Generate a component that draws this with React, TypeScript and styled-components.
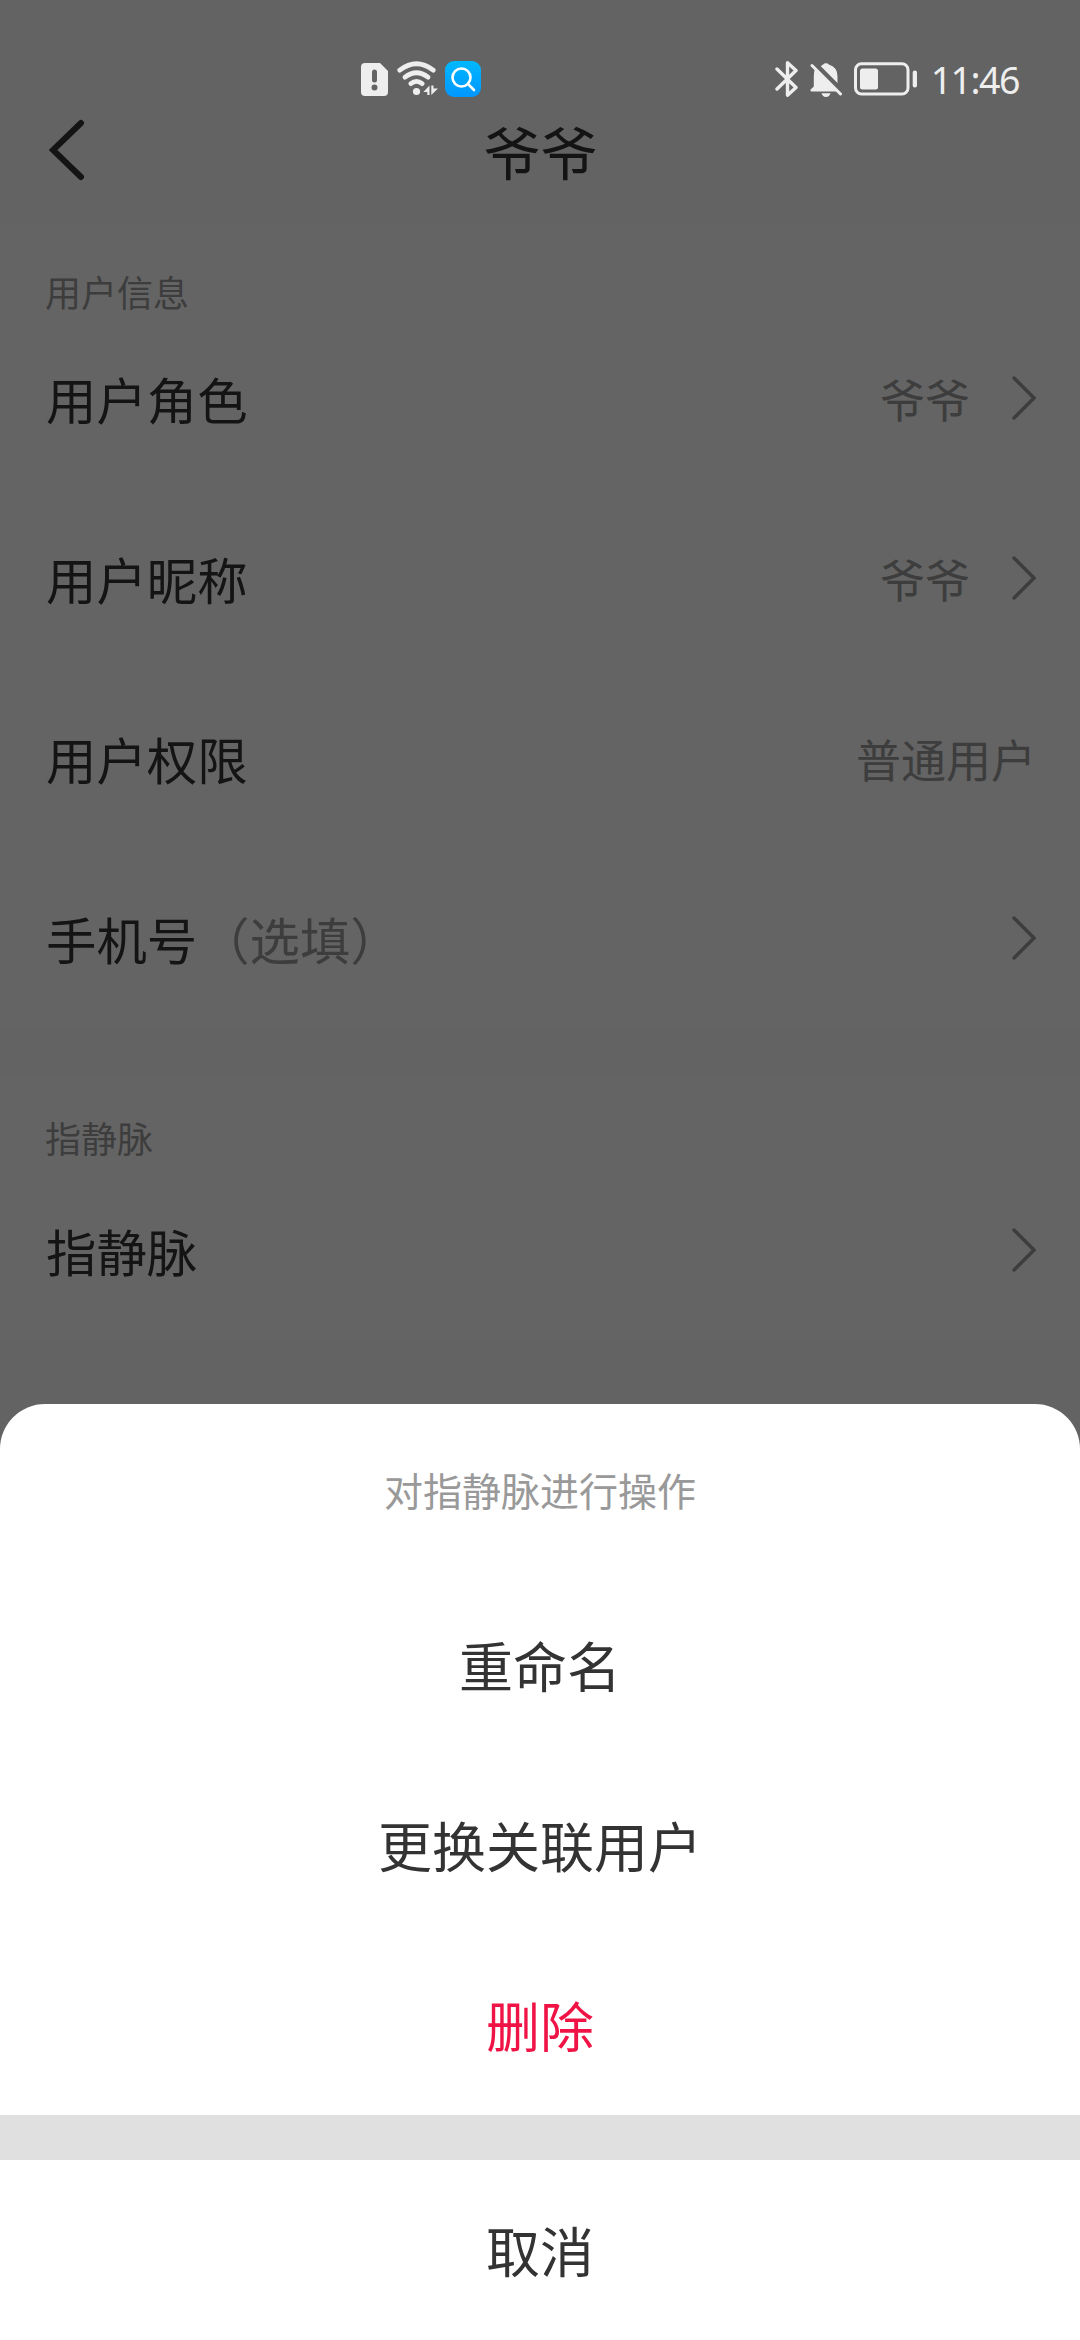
import React from "react";
import styled, { createGlobalStyle } from "styled-components";

const GlobalStyle = createGlobalStyle`
  * { box-sizing: border-box; }
  body {
    margin: 0;
    font-family: "Noto Sans CJK SC", "Noto Sans", sans-serif;
  }
`;

const Screen = styled.div`
  position: relative;
  width: 1080px;
  height: 2340px;
  overflow: hidden;
  background: #f7f7f7;
`;

const Header = styled.header`
  display: grid;
  grid-template-columns: 1fr auto 1fr;
  align-items: center;
  height: 225px;
  padding: 75px 48px 0 49px;
`;

const BackIcon = styled.svg`
  width: 36px;
  height: 62px;
`;

const Title = styled.h1`
  margin: 0;
  font-size: 57px;
  font-weight: 400;
  line-height: 80px;
  color: #333;
`;

const Section = styled.section`
  margin-bottom: 48px;
  background: #fafafa;
`;

const SectionTitle = styled.h2<{ $offset: number }>`
  height: 84px;
  margin: 0;
  padding: ${(p) => p.$offset}px 45px 0;
  font-size: 36px;
  font-weight: 400;
  line-height: 40px;
  color: #999;
`;

const Row = styled.div`
  display: flex;
  align-items: center;
  height: 180px;
  padding: 0 44px 0 46px;
`;

const Label = styled.span`
  flex: 1;
  font-size: 50.4px;
  line-height: 60px;
  color: #333;
`;

const Hint = styled.span`
  margin-left: 2px;
  color: #999;
`;

const Value = styled.span`
  font-size: 45px;
  line-height: 60px;
  color: #999;
`;

const RowArrow = styled.svg`
  width: 24px;
  height: 44px;
  margin: 0 0 2px 42px;
`;

const Scrim = styled.div`
  position: absolute;
  inset: 0;
  display: flex;
  flex-direction: column;
  justify-content: space-between;
  background: rgba(0, 0, 0, 0.6);
`;

const StatusBar = styled.div`
  display: flex;
  align-items: center;
  justify-content: space-between;
  height: 36px;
  margin-top: 61px;
  padding: 0 61px 0 361px;
  color: #eee;
`;

const StatusGroup = styled.div<{ $gap: number }>`
  display: flex;
  align-items: center;
  gap: ${(p) => p.$gap}px;
`;

const Glyph = styled.svg`
  display: block;
  flex: none;
`;

const Clock = styled.span`
  margin-left: 2px;
  padding-top: 2px;
  font-family: "Noto Sans", sans-serif;
  font-size: 37.5px;
  letter-spacing: -1.5px;
  line-height: 36px;
`;

const Sheet = styled.div`
  border-radius: 45px 45px 0 0;
  background: #fff;
`;

const SheetTitle = styled.div`
  height: 171px;
  font-size: 39px;
  line-height: 171px;
  text-align: center;
  color: #999;
`;

const Action = styled.button<{ $danger?: boolean }>`
  display: block;
  width: 100%;
  height: 180px;
  padding: 0;
  border: 0;
  background: none;
  font-family: inherit;
  font-size: 54px;
  line-height: 180px;
  color: ${(p) => (p.$danger ? "#f01446" : "#333")};
`;

const Divider = styled.div`
  height: 45px;
  background: #e0e0e0;
`;

const Arrow = () => (
  <RowArrow viewBox="0 0 24 44" fill="none" stroke="#999" strokeWidth="3.4" strokeLinecap="round">
    <path d="M2 2L22 22L2 42" />
  </RowArrow>
);

interface ItemProps {
  label: string;
  hint?: string;
  value?: string;
  arrow?: boolean;
}

const Item = ({ label, hint, value, arrow }: ItemProps) => (
  <Row>
    <Label>
      {label}
      {hint && <Hint>{hint}</Hint>}
    </Label>
    {value && <Value>{value}</Value>}
    {arrow && <Arrow />}
  </Row>
);

const SimAlertIcon = () => (
  <Glyph width="27" height="33" viewBox="0 0 27 33">
    <path
      fill="currentColor"
      fillRule="evenodd"
      d="M4 0H19L27 8V29Q27 33 23 33H4Q0 33 0 29V4Q0 0 4 0ZM13.5 6.5Q11 6.5 11 9V17Q11 19.5 13.5 19.5Q16 19.5 16 17V9Q16 6.5 13.5 6.5ZM13.5 21.5A3 3 0 1 0 13.5 27.5A3 3 0 1 0 13.5 21.5Z"
    />
  </Glyph>
);

const WifiIcon = () => (
  <Glyph width="43" height="36" viewBox="-2 0 43 36">
    <g fill="none" stroke="currentColor" strokeWidth="4.8" strokeLinecap="round">
      <path d="M2.8 9.2Q19.5 -3.6 36.2 9.2" />
      <path d="M8 16.2Q19.5 7.4 31 16.2" />
      <path d="M13.8 22.6Q19.5 18.2 25.2 22.6" />
    </g>
    <circle cx="19.5" cy="30.5" r="3.6" fill="currentColor" />
    <path fill="currentColor" d="M32.5 24.5V34H30.3V31H26.4ZM34.3 24.5H36.5V27.5H41L34.3 34Z" />
  </Glyph>
);

const SearchBadge = () => (
  <Glyph width="36" height="36" viewBox="0 0 36 36">
    <defs>
      <linearGradient id="badge" x1="0" y1="0" x2="0" y2="1">
        <stop offset="0" stopColor="#00b9ff" />
        <stop offset="1" stopColor="#0096ff" />
      </linearGradient>
    </defs>
    <rect width="36" height="36" rx="9" fill="url(#badge)" />
    <g fill="none" stroke="#fff" strokeWidth="2.6" strokeLinecap="round">
      <circle cx="16.5" cy="16.5" r="9" />
      <path d="M23 23L29 29" />
    </g>
  </Glyph>
);

const BluetoothIcon = () => (
  <Glyph width="24" height="36" viewBox="0 0 24 36">
    <path
      fill="none"
      stroke="currentColor"
      strokeWidth="3.4"
      strokeLinecap="round"
      strokeLinejoin="round"
      d="M2 8L21 26.5L12.5 34.2V1.8L21 9.5L2 28"
    />
  </Glyph>
);

const MutedBellIcon = () => (
  <Glyph width="33" height="36" viewBox="0 0 33 36">
    <path
      fill="currentColor"
      d="M5 7.5L28 30.5H1.5Q0 30.5 0.6 28.5L3.8 25.5V15Q3.8 11 5 7.5ZM10.8 5.2Q12 4 13.2 3.5Q13.8 2.2 16 2.2Q18.2 2.2 18.8 3.5Q27.5 6 27.5 15.5V21.9ZM11.5 32.3H20.5Q19.5 36 16 36Q12.5 36 11.5 32.3Z"
    />
    <path stroke="currentColor" strokeWidth="3" strokeLinecap="round" d="M2 4.5L30.5 33" />
  </Glyph>
);

const BatteryIcon = () => (
  <Glyph width="64" height="34" viewBox="0 0 64 34">
    <rect x="1.5" y="1.7" width="52.5" height="30.3" rx="6" fill="none" stroke="currentColor" strokeWidth="3" />
    <rect x="6" y="6.5" width="18" height="21" rx="2.5" fill="currentColor" />
    <rect x="58.7" y="8.5" width="4.3" height="17" rx="2" fill="currentColor" />
  </Glyph>
);

export default function App() {
  return (
    <>
      <GlobalStyle />
      <Screen>
        <Header>
          <BackIcon viewBox="0 0 36 62" fill="none" stroke="#333" strokeWidth="6" strokeLinecap="round">
            <path d="M32 4L4 31L32 58" />
          </BackIcon>
          <Title>爷爷</Title>
        </Header>
        <Section>
          <SectionTitle $offset={46}>用户信息</SectionTitle>
          <Item label="用户角色" value="爷爷" arrow />
          <Item label="用户昵称" value="爷爷" arrow />
          <Item label="用户权限" value="普通用户" />
          <Item label="手机号" hint="（选填）" arrow />
        </Section>
        <Section>
          <SectionTitle $offset={40}>指静脉</SectionTitle>
          <Item label="指静脉" arrow />
        </Section>
        <Scrim>
          <StatusBar>
            <StatusGroup $gap={7}>
              <SimAlertIcon />
              <WifiIcon />
              <SearchBadge />
            </StatusGroup>
            <StatusGroup $gap={11}>
              <BluetoothIcon />
              <MutedBellIcon />
              <BatteryIcon />
              <Clock>11:46</Clock>
            </StatusGroup>
          </StatusBar>
          <Sheet>
            <SheetTitle>对指静脉进行操作</SheetTitle>
            <Action>重命名</Action>
            <Action>更换关联用户</Action>
            <Action $danger>删除</Action>
            <Divider />
            <Action>取消</Action>
          </Sheet>
        </Scrim>
      </Screen>
    </>
  );
}
